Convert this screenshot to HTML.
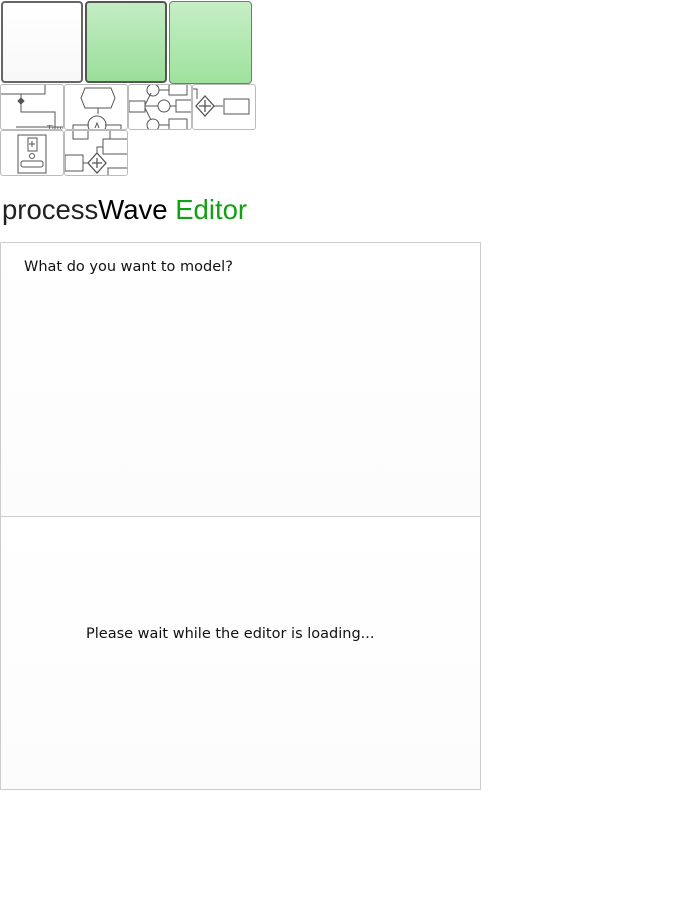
<!DOCTYPE html>
<html><head><meta charset="utf-8"><style>
body{margin:0;background:#fff;font-family:"DejaVu Sans","Liberation Sans",sans-serif;width:700px;height:900px;position:relative;overflow:hidden}
.t{position:absolute;box-sizing:border-box;border-radius:4px}
.big{top:1px;width:82px;height:82px;border:2px solid #666;}
.th{position:absolute;box-sizing:border-box;border:1px solid #bbb;border-radius:3px;background:#fff;overflow:hidden}
h1{position:absolute;left:2px;top:194px;margin:0;font-weight:normal;font-family:"Liberation Sans",sans-serif;font-size:27.5px;color:#222}
.box{position:absolute;left:0;width:481px;box-sizing:border-box;border:1px solid #ccc;background:linear-gradient(#fff,#fcfcfc)}
.txt{position:absolute;font-size:14.5px;color:#111}
</style></head><body>
<div class="t big" style="left:1px;background:linear-gradient(#fff,#f8f8f8)"></div>
<div class="t big" style="left:85px;background:linear-gradient(#c4ecc4,#9ade9a);border-color:#555"></div>
<div class="t" style="left:169px;top:1px;width:83px;height:83px;border:1px solid #777;background:linear-gradient(#c6eec6,#9ee29e)"></div>

<div class="th" style="left:0;top:84px;width:64px;height:46px"><svg width="64" height="46" fill="none" stroke="#555" stroke-width="1"><rect x="-5" y="-5" width="49" height="14"/><path d="M20 9V27H54V46M15 42H64"/><path d="M20 13l3 3-3 3-3-3z" fill="#555"/><text x="46" y="46" font-size="8" fill="#555" stroke="none">Tim</text></svg></div>
<div class="th" style="left:64px;top:84px;width:64px;height:46px"><svg width="64" height="46" fill="none" stroke="#555"><path d="M20 3h26l4 10-4 10H20l-4-10z"/><path d="M33 23v6"/><circle cx="32" cy="40" r="9"/><path d="M8 46V40h16M40 40h16v6"/><path d="M30 43l2-5 2 5"/></svg></div>
<div class="th" style="left:128px;top:84px;width:64px;height:46px"><svg width="64" height="46" fill="none" stroke="#555"><rect x="0" y="16" width="16" height="11"/><circle cx="24" cy="5" r="6"/><circle cx="35" cy="21" r="6"/><circle cx="24" cy="40" r="6"/><rect x="40" y="-2" width="18" height="12"/><rect x="47" y="15" width="18" height="12"/><rect x="40" y="34" width="18" height="12"/><path d="M16 20l6-12M16 21h13M16 23l6 12M30 5h10M41 21h6M30 40h10"/></svg></div>
<div class="th" style="left:192px;top:84px;width:64px;height:46px"><svg width="64" height="46" fill="none" stroke="#555"><path d="M12 11l9 10-9 10-9-10z M12 15v12M6 21h12" stroke-width="1.3"/><path d="M0 4h4v10M21 21h9"/><rect x="31" y="14" width="25" height="15"/></svg></div>
<div class="th" style="left:0;top:130px;width:64px;height:46px"><svg width="64" height="46" fill="none" stroke="#555"><rect x="17" y="4" width="28" height="38"/><rect x="27" y="7" width="9" height="13"/><circle cx="31" cy="25" r="2.5"/><rect x="20" y="30" width="22" height="6" rx="2"/><path d="M31 10v6M28 13h6"/></svg></div>
<div class="th" style="left:64px;top:130px;width:64px;height:46px"><svg width="64" height="46" fill="none" stroke="#555"><rect x="38" y="8" width="28" height="15"/><rect x="0" y="24" width="18" height="16"/><path d="M32 22l9 10-9 10-9-10z M32 27v10M27 32h10" stroke-width="1.3"/><path d="M18 32h5M32 22v-6h6M45 0v8M8 0v8h15V0"/><rect x="43" y="37" width="22" height="12"/></svg></div>

<h1>process<span style="color:#000">Wave</span> <span style="color:#14a014">Editor</span></h1>

<div class="box" style="top:242px;height:275px"><div class="txt" style="left:23px;top:16px">What do you want to model?</div></div>
<div class="box" style="top:516px;height:274px"><div class="txt" style="left:85px;top:109px">Please wait while the editor is loading...</div></div>
</body></html>
